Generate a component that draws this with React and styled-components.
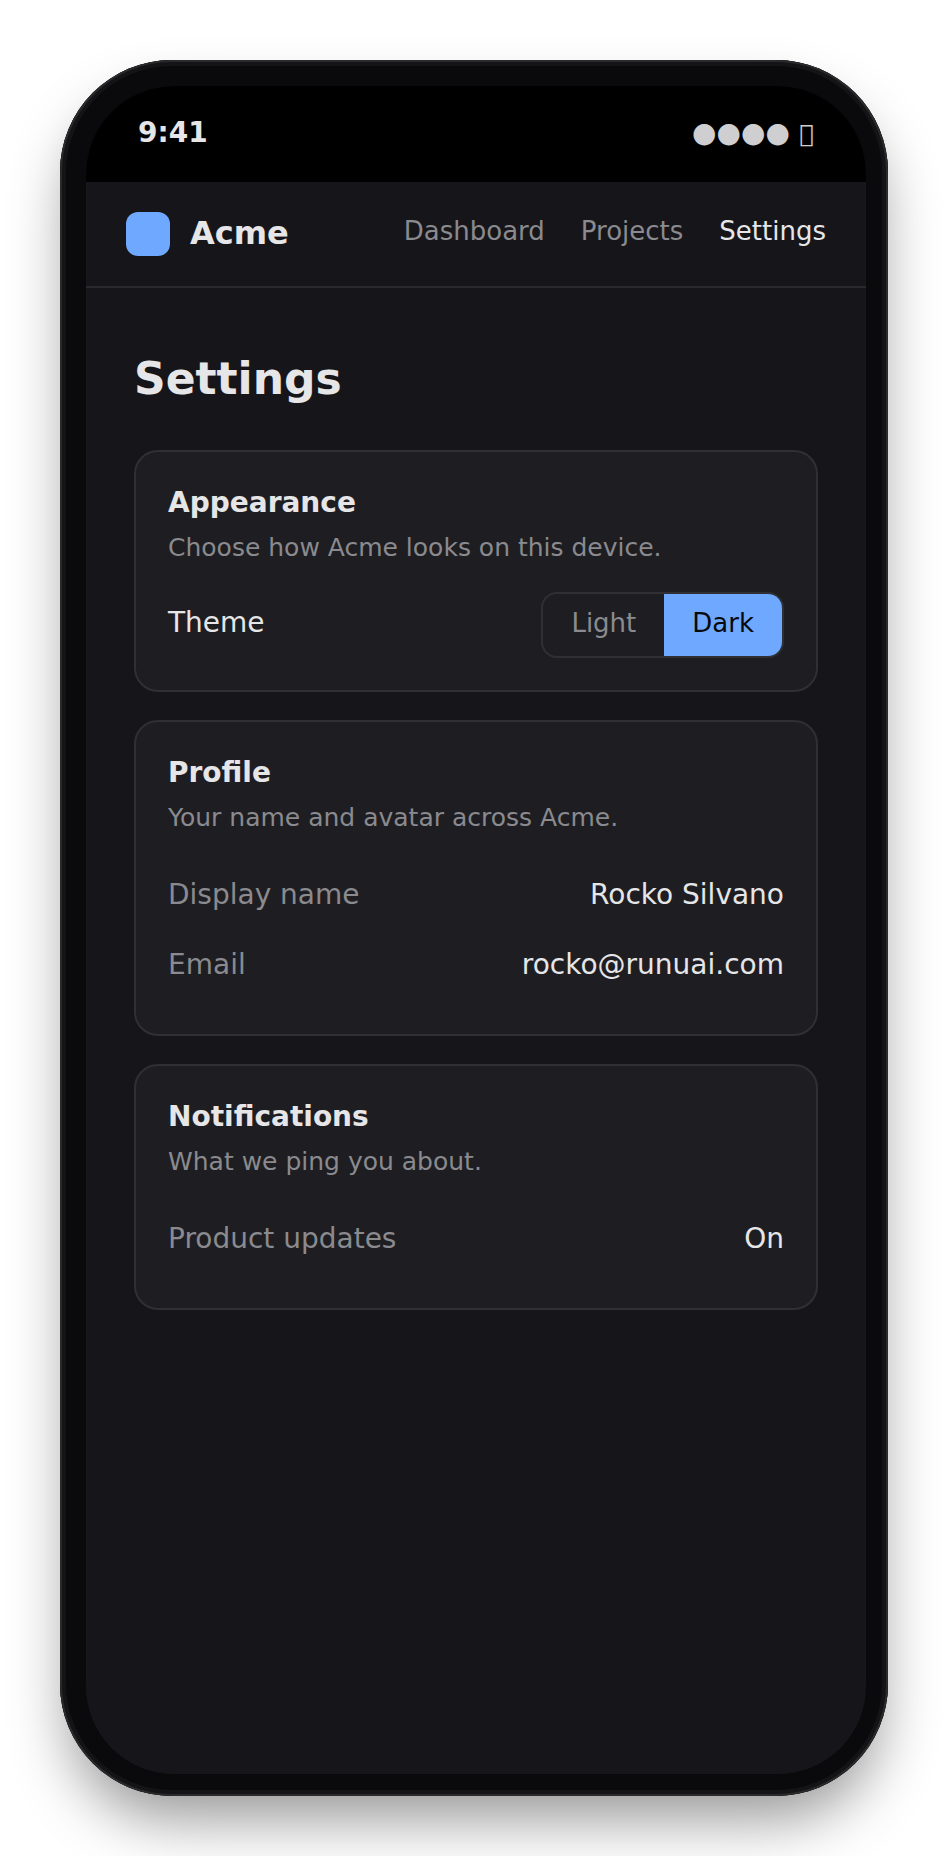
import React, { useState } from "react"
import styled, { createGlobalStyle } from "styled-components"

const GlobalStyle = createGlobalStyle`
  *, *::before, *::after {
    box-sizing: border-box;
  }
  body {
    margin: 0;
    background: #ffffff;
    color: #e6e6e8;
    font-family: "DejaVu Sans", sans-serif;
    font-size: 28px;
    line-height: 36px;
  }
  h1, h2, p, dl, dd {
    margin: 0;
  }
`

const Stage = styled.div`
  min-height: 100vh;
  padding: 60px;
  display: flex;
`

const Device = styled.div`
  flex: 1;
  min-width: 0;
  display: flex;
  padding: 26px 22px 22px 26px;
  border-radius: 112px;
  background: #0a0a0c;
  box-shadow: inset 0 0 0 2px #2a2a2c, inset 0 0 0 6px #141416,
    0 32px 60px -10px rgba(0, 0, 0, 0.42);
`

const Screen = styled.div`
  flex: 1;
  min-width: 0;
  overflow: hidden;
  border-radius: 88px;
  background: #16161a;
`

const StatusBar = styled.div`
  display: flex;
  align-items: center;
  justify-content: space-between;
  height: 96px;
  padding: 0 52px 2px;
  font-weight: 700;
  background: #000000;
`

const Indicators = styled.span`
  opacity: 0.9;
`

const Battery = styled.span`
  font-size: 24px;
`

const Header = styled.header`
  display: flex;
  align-items: center;
  justify-content: space-between;
  padding: 30px 40px;
  border-bottom: 2px solid #2a2a2d;
`

const Brand = styled.div`
  display: flex;
  align-items: center;
  gap: 20px;
  font-size: 32px;
  font-weight: 700;
`

const BrandName = styled.span`
  padding-bottom: 2px;
`

const Logo = styled.span`
  width: 44px;
  height: 44px;
  border-radius: 12px;
  background: #6ea8ff;
`

const Nav = styled.nav`
  display: flex;
  gap: 36px;
  padding-bottom: 6px;
`

const NavLink = styled.a`
  font-size: 26px;
  color: ${({ $active }) => ($active ? "#e6e6e8" : "#8a8a8f")};
  text-decoration: none;
`

const Main = styled.main`
  display: flex;
  flex-direction: column;
  gap: 28px;
  padding: 64px 48px;
`

const Title = styled.h1`
  padding-bottom: 16px;
  font-size: 44px;
  line-height: 54px;
`

const Card = styled.section`
  padding: 32px;
  border: 2px solid #303034;
  border-radius: 24px;
  background: #1e1e22;
`

const CardTitle = styled.h2`
  font-size: 28px;
  line-height: 38px;
`

const CardText = styled.p`
  padding: 11px 0 29px;
  font-size: 25px;
  line-height: 30px;
  color: #8a8a8f;
`

const ThemeRow = styled.div`
  display: flex;
  align-items: baseline;
  justify-content: space-between;
`

const Segmented = styled.div`
  display: flex;
  overflow: hidden;
  border: 2px solid #303034;
  border-radius: 16px;
`

const Segment = styled.button`
  padding: 11px 28px 15px;
  border: 0;
  font: inherit;
  font-size: 26px;
  cursor: pointer;
  background: ${({ $on }) => ($on ? "#6ea8ff" : "transparent")};
  color: ${({ $on }) => ($on ? "#0a0a0c" : "#8a8a8f")};
`

const Field = styled.div`
  display: flex;
  justify-content: space-between;
  padding: 15px 0 19px;
`

const FieldName = styled.dt`
  color: #8a8a8f;
`

const links = ["Dashboard", "Projects", "Settings"]

const groups = [
  {
    title: "Profile",
    text: "Your name and avatar across Acme.",
    fields: [
      ["Display name", "Rocko Silvano"],
      ["Email", "rocko@runuai.com"],
    ],
  },
  {
    title: "Notifications",
    text: "What we ping you about.",
    fields: [["Product updates", "On"]],
  },
]

const Appearance = () => {
  const [theme, setTheme] = useState("Dark")

  return (
    <Card>
      <CardTitle>Appearance</CardTitle>
      <CardText>Choose how Acme looks on this device.</CardText>
      <ThemeRow>
        <span id="theme-label">Theme</span>
        <Segmented role="group" aria-labelledby="theme-label">
          {["Light", "Dark"].map(name => (
            <Segment
              key={name}
              type="button"
              aria-pressed={theme === name}
              $on={theme === name}
              onClick={() => setTheme(name)}
            >
              {name}
            </Segment>
          ))}
        </Segmented>
      </ThemeRow>
    </Card>
  )
}

const App = () => (
  <>
    <GlobalStyle />
    <Stage>
      <Device>
        <Screen>
          <StatusBar>
            <span>9:41</span>
            <Indicators>
              ●●●● <Battery>{"\uf8ff"}</Battery>
            </Indicators>
          </StatusBar>
          <Header>
            <Brand>
              <Logo />
              <BrandName>Acme</BrandName>
            </Brand>
            <Nav>
              {links.map(name => (
                <NavLink
                  key={name}
                  href={`#${name.toLowerCase()}`}
                  $active={name === "Settings"}
                >
                  {name}
                </NavLink>
              ))}
            </Nav>
          </Header>
          <Main>
            <Title>Settings</Title>
            <Appearance />
            {groups.map(({ title, text, fields }) => (
              <Card key={title}>
                <CardTitle>{title}</CardTitle>
                <CardText>{text}</CardText>
                <dl>
                  {fields.map(([name, value]) => (
                    <Field key={name}>
                      <FieldName>{name}</FieldName>
                      <dd>{value}</dd>
                    </Field>
                  ))}
                </dl>
              </Card>
            ))}
          </Main>
        </Screen>
      </Device>
    </Stage>
  </>
)

export default App
